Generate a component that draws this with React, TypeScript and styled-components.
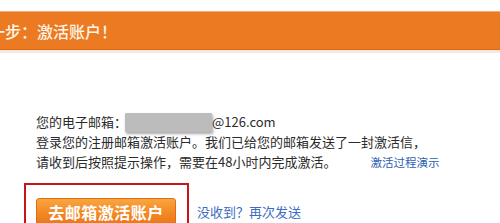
import React from "react";
import styled, { createGlobalStyle } from "styled-components";

const GlobalStyle = createGlobalStyle`
  html, body {
    margin: 0;
    padding: 0;
    background: #ffffff;
    overflow: hidden;
  }
  body {
    font-family: "Noto Sans CJK SC", "Noto Sans", sans-serif;
  }
`;

const Page = styled.div`
  width: 500px;
  height: 223px;
  overflow: hidden;
  background: #fff;
`;

const TitleBar = styled.div`
  margin-top: 11px;
  height: 37px;
  background: #eb7a22;
  border-top: 1px solid #f3ad6c;
  border-bottom: 1px solid #d46a1c;
  box-shadow: 0 3px 0 #f9e6dc;
  display: flex;
  align-items: center;
  overflow: hidden;
`;

const Title = styled.span`
  margin-left: -11px;
  font-size: 16px;
  font-weight: 500;
  color: #fff4e6;
  white-space: nowrap;
`;

const Content = styled.div`
  margin-top: 62px;
  padding-left: 36px;
  font-size: 13px;
  line-height: 20px;
  color: #2b2b2b;
`;

const Line = styled.div`
  display: flex;
  align-items: center;
  white-space: nowrap;
  height: 20px;
`;

const Masked = styled.span`
  display: inline-block;
  width: 87px;
  height: 19px;
  margin: 0 0 0 -2px;
  background: #bcbcbc;
  border-radius: 1px;
  box-shadow: 1px 2px 3px rgba(0, 0, 0, 0.35);
  filter: blur(0.4px);
`;

const Link = styled.a<{ $small?: boolean }>`
  color: ${(p) => (p.$small ? "#2d5fae" : "#3b6cc2")};
  font-size: ${(p) => (p.$small ? "11.5px" : "13px")};
  text-decoration: none;
  cursor: pointer;
`;

const DemoLink = styled(Link)`
  margin-left: 34px;
`;

const ActionRow = styled.div`
  display: flex;
  align-items: flex-start;
  margin-top: 11px;
  margin-left: 24px;
`;

const Highlight = styled.div`
  width: 165px;
  border: 2px solid #c5161d;
  padding: 13px 0 12px 10px;
  box-sizing: border-box;
`;

const MailButton = styled.button`
  width: 140px;
  height: 28px;
  border: 1px solid #e06d12;
  border-radius: 3px;
  background: linear-gradient(to bottom, #f9a640 0%, #f38a26 50%, #e9761a 100%);
  color: #ffffff;
  font-family: "Noto Sans CJK SC", sans-serif;
  font-size: 16px;
  font-weight: 700;
  letter-spacing: 0.5px;
  padding: 0;
  cursor: pointer;
`;

const ResendLink = styled(Link)`
  margin-top: 15px;
  margin-left: 8px;
  line-height: 28px;
`;

export default function App() {
  return (
    <Page>
      <GlobalStyle />
      <TitleBar>
        <Title>一步：激活账户！</Title>
      </TitleBar>
      <Content>
        <Line>
          您的电子邮箱：<Masked />@126.com
        </Line>
        <Line>登录您的注册邮箱激活账户。我们已给您的邮箱发送了一封激活信，</Line>
        <Line>
          请收到后按照提示操作，需要在48小时内完成激活。
          <DemoLink $small>激活过程演示</DemoLink>
        </Line>
      </Content>
      <ActionRow>
        <Highlight>
          <MailButton>去邮箱激活账户</MailButton>
        </Highlight>
        <ResendLink>没收到？再次发送</ResendLink>
      </ActionRow>
    </Page>
  );
}
